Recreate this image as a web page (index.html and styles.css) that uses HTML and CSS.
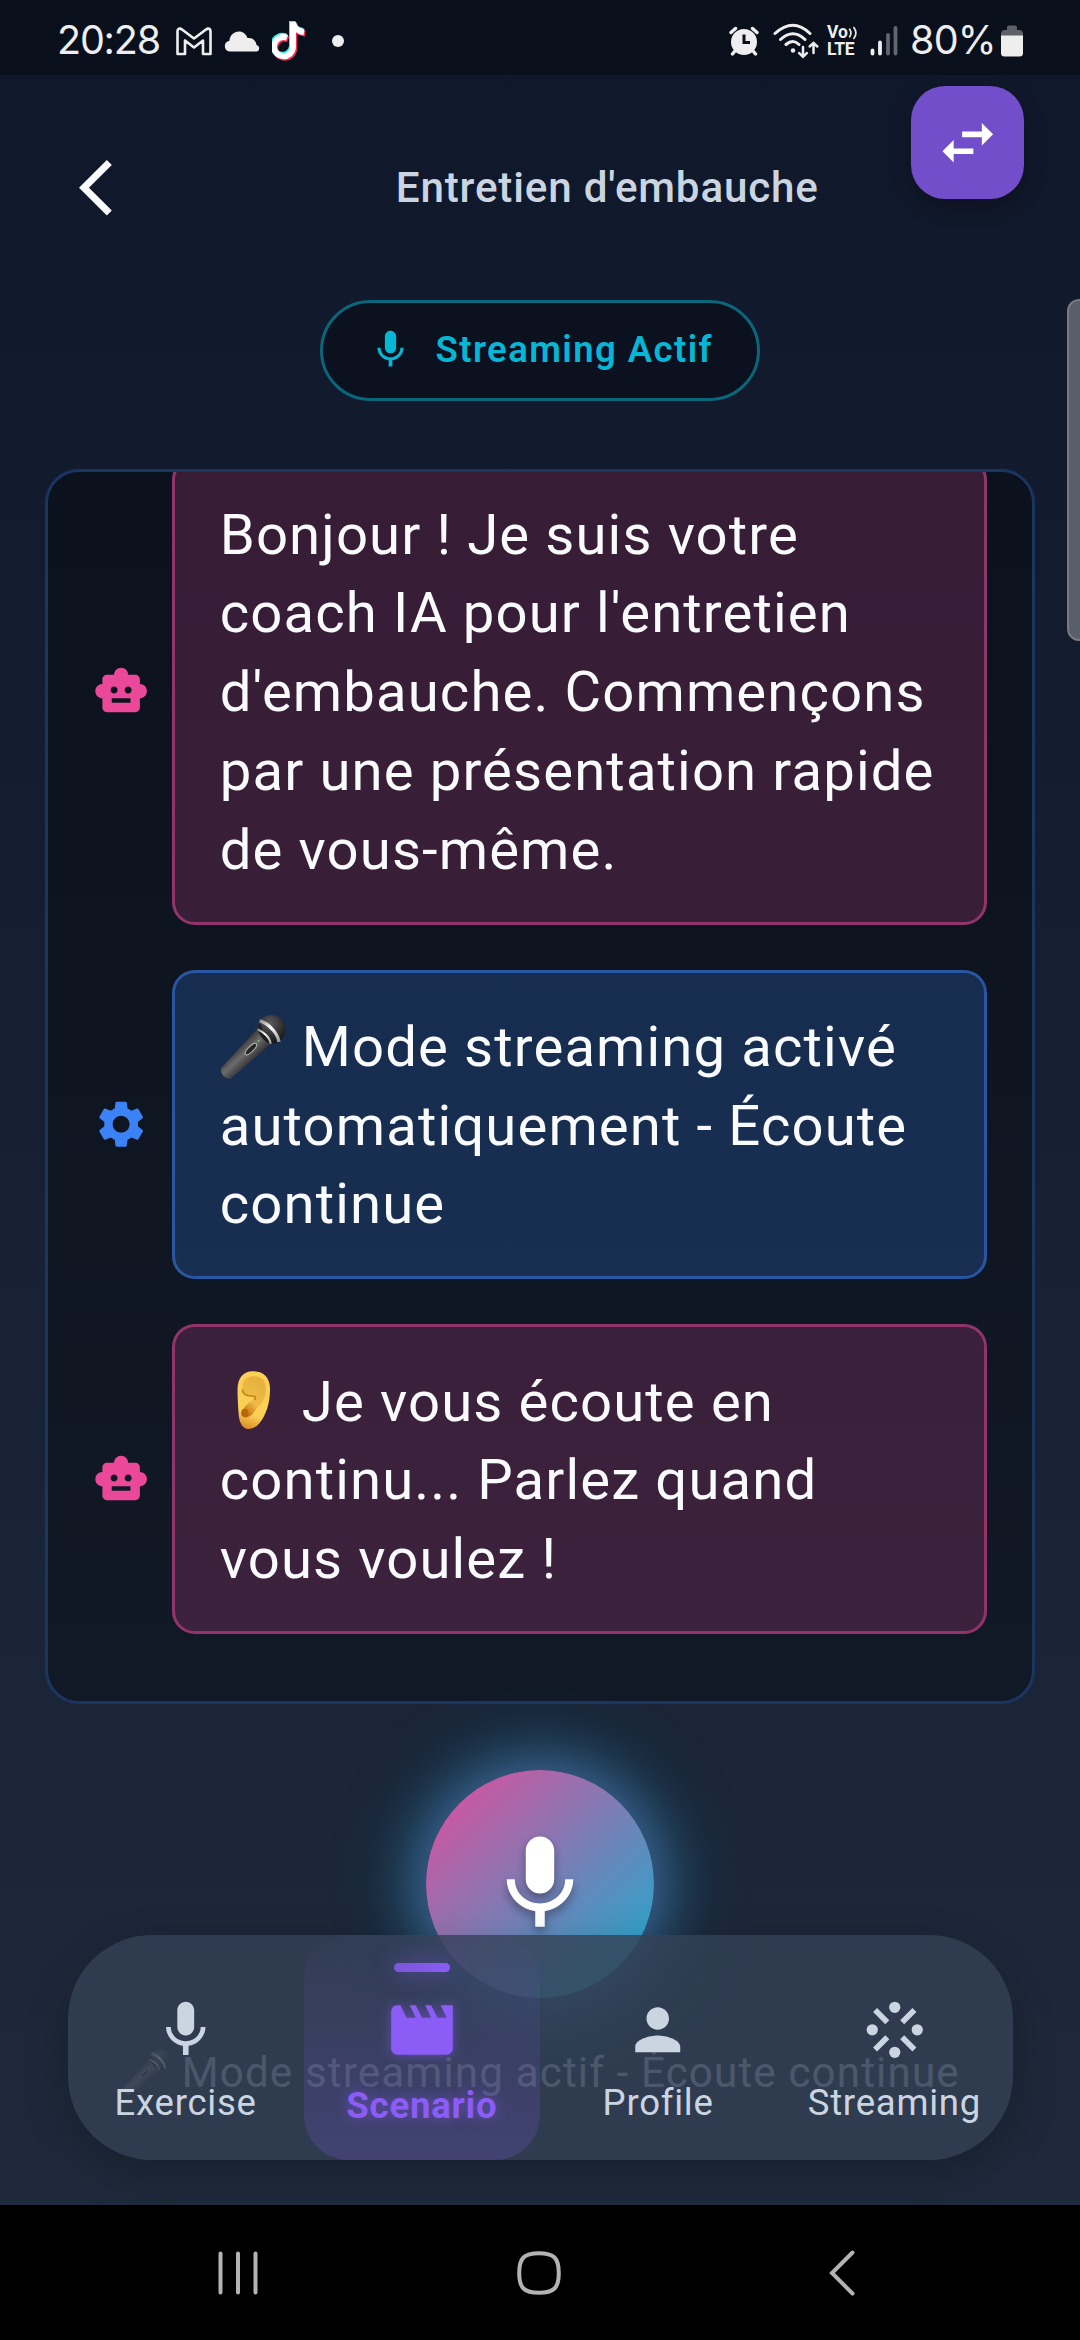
FILE: index.html
```html
<!DOCTYPE html>
<html lang="fr">
<head>
<meta charset="utf-8">
<title>Entretien d'embauche</title>
<link rel="stylesheet" href="styles.css">
</head>
<body>
<svg class="defs" width="0" height="0" aria-hidden="true">
  <defs>
    <symbol id="mic" viewBox="0 0 24 24"><path d="M12 14c1.66 0 2.99-1.34 2.99-3L15 5c0-1.66-1.34-3-3-3S9 3.34 9 5v6c0 1.66 1.34 3 3 3zm5.3-3c0 3-2.54 5.1-5.3 5.1S6.7 14 6.7 11H5c0 3.41 2.72 6.23 6 6.72V21h2v-3.28c3.28-.48 6-3.3 6-6.72h-1.7z"/></symbol>
    <symbol id="robot" viewBox="0 0 24 24"><path d="M20 9V7c0-1.1-.9-2-2-2h-3c0-1.66-1.34-3-3-3S9 3.34 9 5H6c-1.1 0-2 .9-2 2v2c-1.66 0-3 1.34-3 3s1.34 3 3 3v4c0 1.1.9 2 2 2h12c1.1 0 2-.9 2-2v-4c1.66 0 3-1.34 3-3s-1.34-3-3-3zM7.5 11.5c0-.83.67-1.5 1.5-1.5s1.5.67 1.5 1.5S9.83 13 9 13s-1.5-.67-1.5-1.5zM16 17H8v-2h8v2zm-1-4c-.83 0-1.5-.67-1.5-1.5S14.17 10 15 10s1.5.67 1.5 1.5S15.83 13 15 13z"/></symbol>
    <linearGradient id="micBody" gradientUnits="userSpaceOnUse" x1="15" y1="34" x2="30" y2="50">
      <stop offset="0" stop-color="#3a3a3a"/><stop offset=".4" stop-color="#6c6c6c"/><stop offset="1" stop-color="#262626"/>
    </linearGradient>
    <radialGradient id="micHead" cx=".45" cy=".3" r=".7">
      <stop offset="0" stop-color="#5c5c5c"/><stop offset="1" stop-color="#161616"/>
    </radialGradient>
    <linearGradient id="micRing" x1="0" y1="0" x2="1" y2="1">
      <stop offset="0" stop-color="#8c8c8c"/><stop offset=".45" stop-color="#fff"/><stop offset="1" stop-color="#9a9a9a"/>
    </linearGradient>
    <symbol id="microphone" viewBox="0 0 64 64">
      <circle cx="50" cy="14" r="14" fill="url(#micHead)"/>
      <path d="M36 14 L1 52 Q-1 56 3 60 Q7 64 11 62 L50 28 Q40 25 36 14z" fill="url(#micBody)"/>
      <path d="M37 12 Q38 24 50 29 L54 28 Q42 21 39 8z" fill="#1d1d1d"/>
      <path d="M38.500 5.500 Q46 8 52 15 Q57 21 57.500 26.500" fill="none" stroke="url(#micRing)" stroke-width="3.200"/>
      <path d="M36.500 14 Q41 16 45 20 Q49 24 49.500 28.500" fill="none" stroke="url(#micRing)" stroke-width="2"/>
      <ellipse cx="30" cy="33.500" rx="7.500" ry="2.600" transform="rotate(-45 30 33.500)" fill="#262626" stroke="#b5b5b5" stroke-width="1"/>
      <circle cx="37.500" cy="25.500" r="1" fill="#67c25a"/>
    </symbol>
    <linearGradient id="earSkin" x1=".6" y1="0" x2=".4" y2="1">
      <stop offset="0" stop-color="#fbcf55"/><stop offset=".75" stop-color="#fbd057"/><stop offset="1" stop-color="#e0902a"/>
    </linearGradient>
    <linearGradient id="earInner" x1=".7" y1="0" x2=".2" y2="1">
      <stop offset="0" stop-color="#e6b13c"/><stop offset=".6" stop-color="#eebb48"/><stop offset="1" stop-color="#c06a08"/>
    </linearGradient>
    <symbol id="ear" viewBox="0 0 64 64">
      <path d="M32 4C22 4 17 11 17 22c0 8 .5 14 1 23 .5 9 4 15 9.500 15 6 0 11-4 15-12 4-8 6-16 6-27C48.500 10 42 4 32 4z" fill="url(#earSkin)"/>
      <path d="M33 9C25 9 21.500 14 21.500 21c1 5 3 6 8 6 4 0 5 3 1 6-6 4-8.500 7-8.500 13 0 3 3 4 6 2 3-1 5-4 7.500-8 6-6 9-10 9-20C44.500 13 40 9 33 9z" fill="url(#earInner)"/>
      <path d="M21.500 22c1 5 4 6 8 6 4 0 6 1 4 4" fill="none" stroke="#c98a1c" stroke-width="1.800"/>
      <ellipse cx="24" cy="44.500" rx="3.500" ry="4" fill="#b9660a"/>
    </symbol>
  </defs>
</svg>

<div class="screen">
  <div class="statusbar">
    <div class="status-left">
      <span class="status-text clock">20:28</span>
      <svg class="i-gmail" viewBox="0 0 36 29" width="36" height="29"><path d="M1.500 26V4.500Q1.500 1.500 4 1.500L6 2.500 18 11.500 30 2.500 32 1.500Q34.500 1.500 34.500 4.500V27H27V13.500L18 20.500 9 13.500V27H1.500z" fill="none" stroke="#eee" stroke-width="2.600" stroke-linejoin="round"/></svg>
      <svg class="i-cloud" viewBox="0 0 36 21" width="36" height="21"><path d="M5.500 20.500A5.300 5.300 0 0 1 5.300 10C6 4 10 .5 15 .5c4 0 7 2.500 8.500 6.500 5-.5 8.500 2.500 9 7a3.400 3.400 0 0 1 .5 6.500z" fill="#eee"/></svg>
      <svg class="i-tiktok" viewBox="0 0 34 40" width="34" height="40" fill="none" stroke-width="6">
        <g stroke="#25f4ee"><path d="M14 15.500a9.500 9.500 0 1 0 6 9V0c1 6 5 9 11 10"/></g>
        <g stroke="#fe2c55" transform="translate(2.200 2.800)"><path d="M14 15.500a9.500 9.500 0 1 0 6 9V0c1 6 5 9 11 10"/></g>
        <g stroke="#fff" transform="translate(1 1.300)"><path d="M14 15.500a9.500 9.500 0 1 0 6 9V0c1 6 5 9 11 10"/></g>
      </svg>
      <span class="status-dot"></span>
    </div>
    <div class="status-right">
      <svg class="i-alarm" viewBox="0 0 30 30" width="30" height="30"><circle cx="15" cy="16" r="13" fill="#eee"/><path d="M2 6.500L6.500 2.500M28 6.500L23.500 2.500M5.500 25.500l-2 2.500M24.500 25.500l2 2.500" stroke="#eee" stroke-width="3.400" stroke-linecap="round"/><path d="M15 8.500v8h6" fill="none" stroke="#0b101c" stroke-width="3"/></svg>
      <svg class="i-wifi" viewBox="0 0 46 36" width="46" height="36" fill="none" stroke="#eee" stroke-width="3" stroke-linecap="round"><path d="M2 10.500Q20 -6 37 10.500M7.500 16.500Q20 5 32 16.500M13 21.500Q20 15.500 26 21.500"/><circle cx="20" cy="27.500" r="2.200" fill="#eee" stroke="none"/><path d="M30 24v9M26.200 30.200l3.800 3.600 3.800-3.600M40.500 30v-9M36.700 23.500l3.800-3.600 3.800 3.600" stroke-width="2.500"/></svg>
      <div class="volte"><span>Vo<svg viewBox="0 0 12 16" width="10" height="16" fill="none" stroke="#eee" stroke-width="2" stroke-linecap="round"><path d="M2 3.500Q5 8 2 12.500M7 1.500Q12 8 7 14.500"/></svg></span><span>LTE</span></div>
      <svg class="i-signal" viewBox="0 0 28 30" width="28" height="30" stroke-linecap="round" stroke-width="3.800"><path d="M2.500 24.500v3M10 16.500v11" stroke="#eee"/><path d="M18 9v18.500M25.500 2v25.500" stroke="#62656d"/></svg>
      <span class="status-text percent">80%</span>
      <svg class="i-battery" viewBox="0 0 22 32" width="22" height="32"><path d="M0 11V8.500Q0 5 4 5h2V2.500Q6 .5 8 .5h6q2 0 2 2V5h2q4 0 4 3.500V11z" fill="#5d6067"/><path d="M0 10.500h22V28q0 3.500-3.500 3.500h-15Q0 31.500 0 28z" fill="#eee"/></svg>
    </div>
  </div>

  <header class="header">
    <svg class="back" viewBox="0 0 24 24"><path d="M11.670 3.870L9.900 2.100 0 12l9.900 9.900 1.770-1.770L3.540 12z"/></svg>
    <h1 class="title">Entretien d'embauche</h1>
  </header>
  <div class="swap"><svg viewBox="0 0 24 24"><path d="M6.990 11L3 15l3.990 4v-3H14v-2H6.990v-3zM21 9l-3.990-4v3H10v2h7.010v3L21 9z"/></svg></div>

  <div class="pill"><svg class="pill-icon"><use href="#mic"/></svg><span>Streaming Actif</span></div>
  <div class="scroll-thumb"></div>

  <main class="chat">
    <div class="row">
      <svg class="avatar pink"><use href="#robot"/></svg>
      <div class="bubble coach">Bonjour ! Je suis votre<br>coach IA pour l'entretien<br>d'embauche. Commençons<br>par une présentation rapide<br>de vous-même.</div>
    </div>
    <div class="row">
      <svg class="avatar blue" viewBox="0 0 24 24"><path d="M19.140 12.940c.04-.3.06-.61.06-.94 0-.32-.02-.64-.07-.94l2.030-1.580c.18-.14.23-.41.12-.61l-1.920-3.320c-.12-.22-.37-.29-.59-.22l-2.390.96c-.5-.38-1.030-.7-1.620-.94l-.36-2.540c-.04-.24-.24-.41-.48-.41h-3.840c-.24 0-.43.17-.47.41l-.36 2.540c-.59.24-1.130.57-1.620.94l-2.390-.96c-.22-.08-.47 0-.59.22L2.740 8.870c-.12.21-.08.47.12.61l2.030 1.580c-.05.3-.09.63-.09.94s.02.64.07.94l-2.030 1.580c-.18.14-.23.41-.12.61l1.920 3.320c.12.22.37.29.59.22l2.390-.96c.5.38 1.030.7 1.620.94l.36 2.540c.05.24.24.41.48.41h3.840c.24 0 .44-.17.47-.41l.36-2.540c.59-.24 1.130-.56 1.620-.94l2.390.96c.22.08.47 0 .59-.22l1.920-3.320c.12-.22.07-.47-.12-.61l-2.010-1.580zM12 15.600c-1.980 0-3.600-1.620-3.600-3.600s1.620-3.600 3.600-3.600 3.600 1.620 3.600 3.600-1.620 3.600-3.600 3.600z"/></svg>
      <div class="bubble system"><svg class="emoji emoji-mic" role="img" aria-label="🎤"><use href="#microphone"/></svg> Mode streaming activé<br>automatiquement - Écoute<br>continue</div>
    </div>
    <div class="row">
      <svg class="avatar pink"><use href="#robot"/></svg>
      <div class="bubble coach"><svg class="emoji" role="img" aria-label="👂"><use href="#ear"/></svg> Je vous écoute en<br>continu... Parlez quand<br>vous voulez !</div>
    </div>
  </main>

  <div class="record"><svg><use href="#mic"/></svg></div>
  <p class="hint"><svg class="emoji" role="img" aria-label="🎤"><use href="#microphone"/></svg> Mode streaming actif - Écoute continue</p>

  <nav class="tabs">
    <a class="tab"><svg><use href="#mic"/></svg><span>Exercise</span></a>
    <a class="tab active"><svg viewBox="0 0 24 24"><path d="M18 4l2 4h-3l-2-4h-2l2 4h-3l-2-4H8l2 4H7L5 4H4c-1.100 0-1.990.9-1.990 2L2 18c0 1.100.9 2 2 2h16c1.100 0 2-.9 2-2V4h-4z"/></svg><span>Scenario</span></a>
    <a class="tab"><svg viewBox="0 0 24 24"><path d="M12 12c2.210 0 4-1.790 4-4s-1.790-4-4-4-4 1.790-4 4 1.790 4 4 4zm0 2c-2.670 0-8 1.340-8 4v2h16v-2c0-2.660-5.330-4-8-4z"/></svg><span>Profile</span></a>
    <a class="tab"><svg viewBox="0 0 24 24"><circle cx="12" cy="4" r="2"/><circle cx="12" cy="20" r="2"/><circle cx="4" cy="12" r="2"/><circle cx="20" cy="12" r="2"/><path d="M5 5l4.350 4.350M19 5l-4.350 4.350M5 19l4.350-4.350M19 19l-4.350-4.350" stroke="currentColor" stroke-width="2"/></svg><span>Streaming</span></a>
  </nav>

  <div class="sysbar">
    <svg viewBox="0 0 40 46" width="40" height="46" stroke="#b3b3b3" stroke-width="4" stroke-linecap="round"><path d="M2.500 3.500v39M20 3.500v39M37.500 3.500v39"/></svg>
    <svg viewBox="0 0 46 46" width="46" height="46" fill="none" stroke="#b3b3b3" stroke-width="4"><path d="M23 3.200C38 3.200 42.800 8 42.800 23S38 42.800 23 42.800 3.200 38 3.200 23 8 3.200 23 3.200z"/></svg>
    <svg viewBox="0 0 28 46" width="28" height="46" fill="none" stroke="#b3b3b3" stroke-width="4" stroke-linecap="round"><path d="M24.500 2.500L4 23l20.500 20.500"/></svg>
  </div>
</div>
</body>
</html>
```
FILE: styles.css
```css
* { box-sizing: border-box; }
body { margin: 0; background: #000; font-family: Roboto, sans-serif; color: #f8fafc; }
.defs { position: absolute; }
svg { display: block; flex: none; }
svg:not([fill]) { fill: currentColor; }

.screen {
  position: relative;
  display: flex;
  flex-direction: column;
  width: 1080px;
  height: 2340px;
  overflow: hidden;
  background: linear-gradient(#0f172a, #1e293b 2205px);
}

/* Status bar */
.statusbar {
  display: flex;
  justify-content: space-between;
  height: 75px;
  padding: 0 57px 0 57px;
  background: rgba(0, 0, 0, .33);
  color: #eee;
}
.status-left, .status-right { display: flex; align-items: center; height: 82px; }
.status-text { font-family: Inter, Roboto, sans-serif; font-size: 39.500px; font-weight: 400; line-height: 1; }
.clock { width: 119px; letter-spacing: -1.200px; }
.percent { width: 84px; margin-left: 12px; letter-spacing: -.8px; white-space: nowrap; }
.i-cloud { margin-left: 12px; }
.i-tiktok { margin-left: 12px; }
.status-dot { width: 12px; height: 12px; margin-left: 26px; border-radius: 50%; background: #eee; }
.i-wifi { margin-left: 14px; }
.volte { display: flex; flex-direction: column; margin-left: 8px; font-size: 17.500px; font-weight: 700; line-height: 17px; width: 31px; }
.volte span { display: flex; align-items: center; height: 17px; }
.volte span + span { letter-spacing: -.3px; }
.i-signal { margin-left: 12px; }
.i-battery { margin-left: 7px; }

/* Header */
.header { display: flex; align-items: center; height: 225px; padding: 0 12px 0 79px; }
.back { width: 67.500px; height: 67.500px; }
.title { flex: 1; margin: 0; text-align: center; font-size: 42.190px; font-weight: 500; letter-spacing: .8px; color: #cbd5e1; }
.swap {
  position: absolute;
  top: 86px;
  left: 911px;
  display: flex;
  align-items: center;
  justify-content: center;
  width: 113px;
  height: 113px;
  border-radius: 34px;
  background: #724ecb;
  color: #fff;
  box-shadow: 0 8px 20px rgba(0, 0, 0, .3);
}
.swap svg { width: 67.500px; height: 67.500px; }

.pill {
  display: flex;
  align-items: center;
  align-self: center;
  gap: 22.500px;
  width: 440px;
  height: 101px;
  padding: 0 0 2px 45px;
  border: 3px solid #09667b;
  border-radius: 51px;
  background: #0b111e;
  color: #06b6d4;
  font-size: 36.560px;
  font-weight: 600;
  letter-spacing: 1.400px;
  white-space: nowrap;
}
.pill-icon { width: 45px; height: 45px; }

.scroll-thumb {
  position: absolute;
  top: 299px;
  right: -3px;
  width: 16px;
  height: 342px;
  border: 2px solid #77797f;
  border-radius: 12px 0 0 12px;
  background: #595e6b;
}

/* Conversation */
.chat {
  display: flex;
  flex-direction: column;
  justify-content: flex-end;
  gap: 45px;
  height: 1235px;
  margin: 68px 45px 0;
  padding: 0 45px 67px;
  overflow: hidden;
  border: 3px solid #1b3563;
  border-radius: 34px;
  background: linear-gradient(#0b121d, #121926);
}
.row { display: flex; flex: none; align-items: center; gap: 22.500px; }
.avatar { width: 56.250px; height: 56.250px; }
.pink { color: #ec4899; }
.blue { color: #3b82f6; }
.bubble {
  flex: 1;
  min-width: 0;
  padding: 35.250px 45px 32.250px;
  border: 3px solid;
  border-radius: 23px;
  font-size: 56.250px;
  line-height: 78.750px;
  letter-spacing: 1.120px;
  white-space: nowrap;
}
.coach { border-color: #93336b; background: rgba(236, 72, 153, .2); }
.system { border-color: #2856a2; background: rgba(59, 130, 246, .22); }
.bubble .emoji { display: inline-block; width: 66px; height: 66px; margin-right: 1px; vertical-align: -12px; }
.bubble .emoji-mic { height: 65px; vertical-align: -14px; }

.record {
  display: flex;
  flex: none;
  align-items: center;
  justify-content: center;
  align-self: center;
  width: 228px;
  height: 228px;
  margin-top: 66px;
  border-radius: 50%;
  background: linear-gradient(135deg, #e44b9b, #12b0d0);
  color: #fff;
  box-shadow: 0 0 50px 10px rgba(92, 125, 195, .55), 0 0 84px 14px rgba(6, 182, 212, .3);
}
.record svg { width: 114px; height: 114px; filter: drop-shadow(0 5px 5px rgba(0, 0, 0, .35)); }

.hint { display: flex; align-items: baseline; justify-content: center; margin: 42px 0 0; padding-left: 3px; font-size: 42.190px; line-height: 50px; letter-spacing: 1.120px; white-space: pre; color: #b4bfce; }
.hint .emoji { width: 47px; height: 47px; transform: translateY(9px); }

/* Bottom tabs */
.tabs {
  position: absolute;
  top: 1935px;
  left: 67.500px;
  display: grid;
  grid-template-columns: repeat(4, 1fr);
  width: 945px;
  height: 225px;
  border-radius: 84px;
  background: rgba(51, 65, 85, .82);
  box-shadow: 0 14px 44px rgba(0, 0, 0, .22);
}
.tab {
  position: relative;
  display: flex;
  flex-direction: column;
  align-items: center;
  padding-top: 61px;
  color: #cbd5e1;
  font-size: 36.560px;
  line-height: 44px;
  letter-spacing: .750px;
}
.tab svg { width: 67.500px; height: 67.500px; margin-bottom: 17px; }
.active {
  padding-top: 58px;
  border-radius: 45px;
  background: linear-gradient(rgba(139, 92, 246, .02), rgba(139, 92, 246, .2));
  color: #8b5cf6;
  font-weight: 700;
  text-shadow: 0 0 14px rgba(139, 92, 246, .6);
}
.active svg { width: 74px; height: 74px; filter: drop-shadow(0 0 6px rgba(139, 92, 246, .5)); }
.active::before {
  content: "";
  position: absolute;
  top: 28px;
  left: 90px;
  width: 56px;
  height: 9px;
  border-radius: 5px;
  background: linear-gradient(90deg, #7a57d8, #8b5cf6);
  box-shadow: 0 0 22px rgba(139, 92, 246, .5);
}

.sysbar { display: flex; flex: none; align-items: center; gap: 258px; height: 135px; margin-top: auto; padding-left: 218px; background: #000; }
.sysbar svg + svg + svg { margin-left: 8px; }
```
